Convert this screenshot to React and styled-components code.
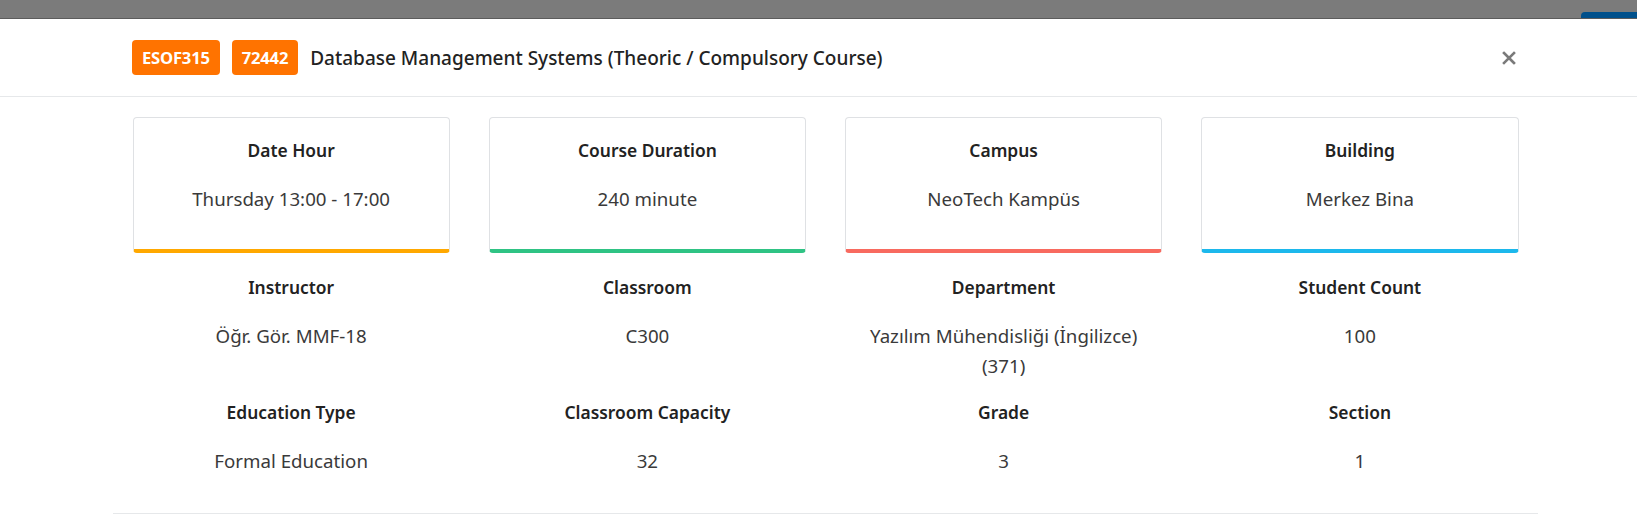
import React from "react";
import styled, { createGlobalStyle } from "styled-components";

const Global = createGlobalStyle`
  html, body { margin: 0; padding: 0; background: #ffffff; }
  body { font-family: "Noto Sans", "Open Sans", sans-serif; color: #333; }
  * { box-sizing: border-box; }
`;

const Page = styled.div`
  width: 1637px;
  height: 517px;
  overflow: hidden;
  display: flex;
  flex-direction: column;
  background: #fff;
`;

const Backdrop = styled.div`
  height: 19px;
  flex: none;
  background: #7b7b7b;
  border-bottom: 1px solid #5c5c5c;
  display: flex;
  justify-content: flex-end;
  align-items: flex-end;
`;

const HiddenButton = styled.div`
  width: 56px;
  height: 6px;
  background: #00508b;
  border-radius: 4px 0 0 0;
`;

const Modal = styled.div`
  flex: 1;
  display: flex;
  flex-direction: column;
  background: #fff;
`;

const Header = styled.div`
  height: 78px;
  flex: none;
  border-bottom: 1px solid #e6e8ea;
  display: flex;
  align-items: center;
  padding: 0 118px 0 132px;
`;

const Badge = styled.span`
  display: inline-flex;
  align-items: center;
  justify-content: center;
  height: 35px;
  padding: 0 10px;
  background: #ff7300;
  color: #fff;
  font-weight: 700;
  font-size: 16.6px;
  border-radius: 4px;
  margin-right: 12px;
  letter-spacing: -0.2px;
`;

const Title = styled.h5`
  margin: 0;
  flex: 1;
  font-size: 19px;
  font-weight: 500;
  color: #222;
`;

const Close = styled.button`
  border: 0;
  background: transparent;
  padding: 0;
  width: 20px;
  height: 20px;
  display: flex;
  align-items: center;
  justify-content: center;
  cursor: pointer;
`;

const Body = styled.div`
  padding: 20px 0 0 113px;
  flex: 1;
  display: flex;
  flex-direction: column;
`;

const Grid = styled.div`
  width: 1425px;
  display: grid;
  grid-template-columns: repeat(4, 1fr);
`;

const Col = styled.div`
  padding: 0 19.5px;
`;

const Cell = styled.div`
  text-align: center;
  padding: 20px 4px 0;
  ${(p) =>
    p.$accent
      ? `
    height: 136px;
    border: 1px solid #dfe1e4;
    border-bottom: 4px solid ${p.$accent};
    border-radius: 4px;
    padding-top: 18px;
  `
      : `
    height: 125px;
  `}
`;

const Label = styled.div`
  font-size: 17.4px;
  font-weight: 600;
  line-height: 28px;
  color: #222;
`;

const Value = styled.div`
  margin-top: 20px;
  font-size: 18.7px;
  line-height: 30px;
  color: #3a3a3a;
`;

const Footer = styled.div`
  margin-top: auto;
  width: 1425px;
  height: 4px;
  border-top: 1px solid #e6e8ea;
`;

const cards = [
  { label: "Date Hour", value: "Thursday 13:00 - 17:00", accent: "#ffa800" },
  { label: "Course Duration", value: "240 minute", accent: "#2fc384" },
  { label: "Campus", value: "NeoTech Kampüs", accent: "#f86a5f" },
  { label: "Building", value: "Merkez Bina", accent: "#1cb8ec" },
];

const info = [
  { label: "Instructor", value: "Öğr. Gör. MMF-18" },
  { label: "Classroom", value: "C300" },
  { label: "Department", value: "Yazılım Mühendisliği (İngilizce) (371)" },
  { label: "Student Count", value: "100" },
  { label: "Education Type", value: "Formal Education" },
  { label: "Classroom Capacity", value: "32" },
  { label: "Grade", value: "3" },
  { label: "Section", value: "1" },
];

export default function App() {
  return (
    <>
      <Global />
      <Page>
        <Backdrop>
          <HiddenButton />
        </Backdrop>
        <Modal>
          <Header>
            <Badge>ESOF315</Badge>
            <Badge>72442</Badge>
            <Title>Database Management Systems (Theoric / Compulsory Course)</Title>
            <Close aria-label="Close">
              <svg width="14" height="14" viewBox="0 0 14 14">
                <path d="M2 2 L12 12 M12 2 L2 12" stroke="#7a7a7a" strokeWidth="2.6" strokeLinecap="square" />
              </svg>
            </Close>
          </Header>
          <Body>
            <Grid>
              {cards.map((c) => (
                <Col key={c.label}>
                  <Cell $accent={c.accent}>
                    <Label>{c.label}</Label>
                    <Value>{c.value}</Value>
                  </Cell>
                </Col>
              ))}
              {info.map((c) => (
                <Col key={c.label}>
                  <Cell>
                    <Label>{c.label}</Label>
                    <Value>{c.value}</Value>
                  </Cell>
                </Col>
              ))}
            </Grid>
            <Footer />
          </Body>
        </Modal>
      </Page>
    </>
  );
}
